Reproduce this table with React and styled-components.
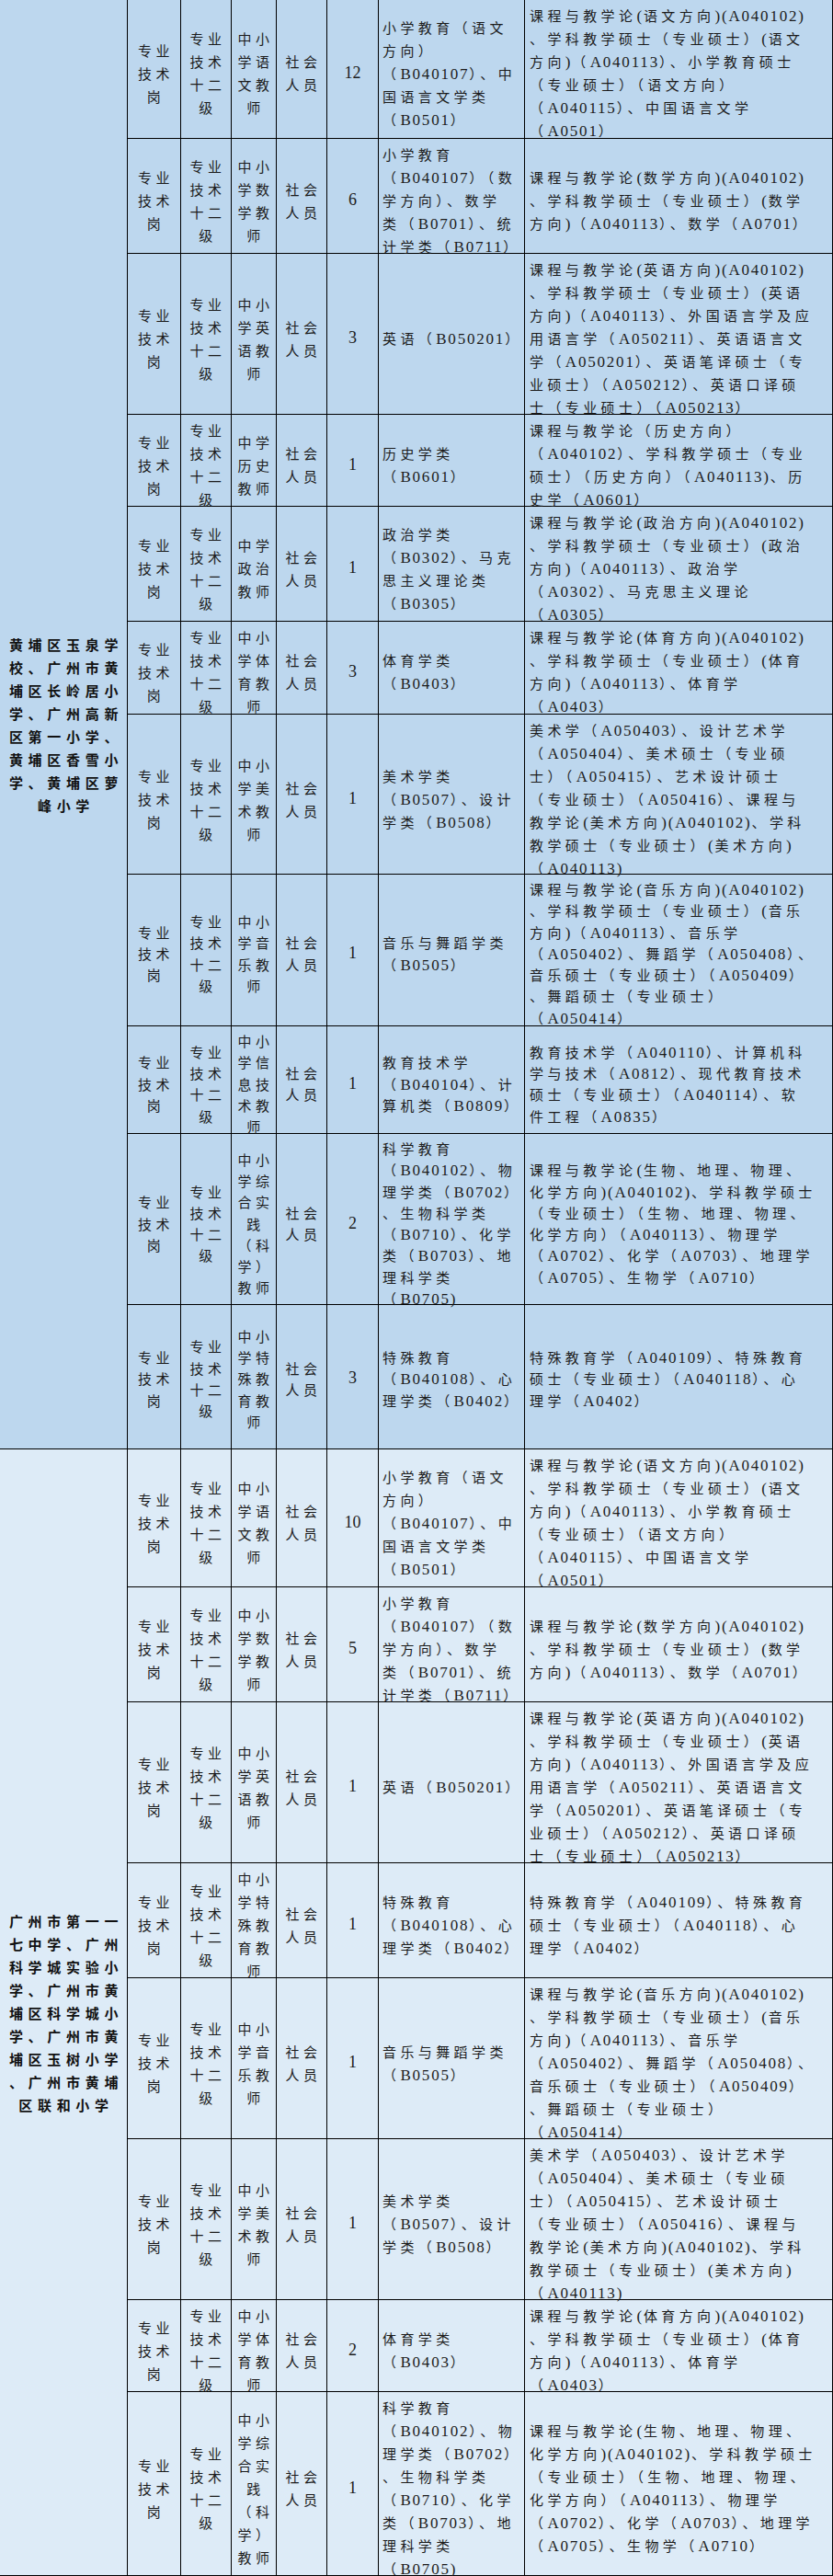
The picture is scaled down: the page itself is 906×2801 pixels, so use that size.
import React from "react";
import styled, { createGlobalStyle } from "styled-components";

const CJK = `"Noto Sans CJK SC", "Noto Sans", sans-serif`;
const LATIN = `"Liberation Serif", "Noto Sans CJK SC", serif`;

const GlobalStyle = createGlobalStyle`
  html, body {
    margin: 0;
    padding: 0;
    background: #ffffff;
  }
`;

const Sheet = styled.div`
  width: 906px;
  font-family: ${CJK};
  font-size: 15px;
  letter-spacing: 4.4px;
  color: #1c1c1c;
`;

const Section = styled.section`
  display: flex;
  background: ${(p) => p.$bg};
`;

const SchoolCell = styled.div`
  flex: 0 0 139px;
  box-sizing: border-box;
  display: flex;
  flex-direction: column;
  justify-content: center;
  padding-left: 6px;
  border-right: 1px solid #000;
  border-bottom: 1px solid #000;
  font-weight: 700;
  letter-spacing: 5.7px;
  line-height: 25px;
  text-align: center;
  color: #111;
`;

const RowList = styled.div`
  flex: 1;
  display: flex;
  flex-direction: column;
`;

const Row = styled.div`
  display: grid;
  grid-template-columns: 58px 55px 49px 55px 56px 159px 335px;
  box-sizing: border-box;
  height: ${(p) => p.$h}px;
  border-bottom: 1px solid #000;
  line-height: ${(p) => p.$lh}px;
`;

const Cell = styled.div`
  box-sizing: border-box;
  display: flex;
  flex-direction: column;
  justify-content: center;
  border-right: 1px solid #000;
  padding-top: 4px;
  min-width: 0;
`;

const CenterCell = styled(Cell)`
  align-items: center;
  text-align: center;
  padding-left: 4px;
`;

const TextCell = styled(Cell)`
  padding-left: ${(p) => p.$pad}px;
`;

const CountCell = styled(Cell)`
  align-items: center;
  font-family: ${LATIN};
  font-size: 18px;
  letter-spacing: 0;
`;

const Line = styled.span`
  display: block;
  white-space: nowrap;
  height: ${(p) => p.$lh}px;
`;

const Latin = styled.span`
  font-family: ${LATIN};
  font-size: 17px;
  letter-spacing: 1.8px;
  line-height: 1;
`;

function Runs({ text }) {
  return text.split(/([\x20-\x7E]+)/).map((part, i) =>
    /^[\x20-\x7E]+$/.test(part) ? <Latin key={i}>{part}</Latin> : part
  );
}

function Lines({ lines, lh }) {
  return lines.map((l, i) => (
    <Line key={i} $lh={lh}>
      <Runs text={l} />
    </Line>
  ));
}

const POSTS = {
  chinese: {
    title: "中小学语文教师",
    bachelor: ["小学教育（语文", "方向）", "（B040107）、中", "国语言文学类", "（B0501）"],
    master: [
      "课程与教学论(语文方向)(A040102)",
      "、学科教学硕士（专业硕士）(语文",
      "方向)（A040113）、小学教育硕士",
      "（专业硕士）（语文方向）",
      "（A040115）、中国语言文学",
      "（A0501）",
    ],
  },
  math: {
    title: "中小学数学教师",
    bachelor: ["小学教育", "（B040107）（数", "学方向）、数学", "类（B0701）、统", "计学类（B0711）"],
    master: [
      "课程与教学论(数学方向)(A040102)",
      "、学科教学硕士（专业硕士）(数学",
      "方向)（A040113）、数学（A0701）",
    ],
  },
  english: {
    title: "中小学英语教师",
    bachelor: ["英语（B050201）"],
    master: [
      "课程与教学论(英语方向)(A040102)",
      "、学科教学硕士（专业硕士）(英语",
      "方向)（A040113）、外国语言学及应",
      "用语言学（A050211）、英语语言文",
      "学（A050201）、英语笔译硕士（专",
      "业硕士）（A050212）、英语口译硕",
      "士（专业硕士）（A050213）",
    ],
  },
  history: {
    title: "中学历史教师",
    bachelor: ["历史学类", "（B0601）"],
    master: [
      "课程与教学论（历史方向）",
      "（A040102）、学科教学硕士（专业",
      "硕士）（历史方向）（A040113)、历",
      "史学（A0601）",
    ],
  },
  politics: {
    title: "中学政治教师",
    bachelor: ["政治学类", "（B0302）、马克", "思主义理论类", "（B0305）"],
    master: [
      "课程与教学论(政治方向)(A040102)",
      "、学科教学硕士（专业硕士）(政治",
      "方向)（A040113）、政治学",
      "（A0302）、马克思主义理论",
      "（A0305）",
    ],
  },
  sports: {
    title: "中小学体育教师",
    bachelor: ["体育学类", "（B0403）"],
    master: [
      "课程与教学论(体育方向)(A040102)",
      "、学科教学硕士（专业硕士）(体育",
      "方向)（A040113）、体育学",
      "（A0403）",
    ],
  },
  art: {
    title: "中小学美术教师",
    bachelor: ["美术学类", "（B0507）、设计", "学类（B0508）"],
    master: [
      "美术学（A050403）、设计艺术学",
      "（A050404）、美术硕士（专业硕",
      "士）（A050415）、艺术设计硕士",
      "（专业硕士）（A050416）、课程与",
      "教学论(美术方向)(A040102)、学科",
      "教学硕士（专业硕士）(美术方向)",
      "（A040113)",
    ],
  },
  music: {
    title: "中小学音乐教师",
    bachelor: ["音乐与舞蹈学类", "（B0505）"],
    master: [
      "课程与教学论(音乐方向)(A040102)",
      "、学科教学硕士（专业硕士）(音乐",
      "方向)（A040113）、音乐学",
      "（A050402）、舞蹈学（A050408）、",
      "音乐硕士（专业硕士）（A050409）",
      "、舞蹈硕士（专业硕士）",
      "（A050414）",
    ],
  },
  it: {
    title: "中小学信息技术教师",
    bachelor: ["教育技术学", "（B040104）、计", "算机类（B0809）"],
    master: [
      "教育技术学（A040110）、计算机科",
      "学与技术（A0812）、现代教育技术",
      "硕士（专业硕士）（A040114）、软",
      "件工程（A0835）",
    ],
  },
  science: {
    title: "中小学综合实践（科学）教师",
    bachelor: [
      "科学教育",
      "（B040102）、物",
      "理学类（B0702）",
      "、生物科学类",
      "（B0710）、化学",
      "类（B0703）、地",
      "理科学类",
      "（B0705)",
    ],
    master: [
      "课程与教学论(生物、地理、物理、",
      "化学方向)(A040102)、学科教学硕士",
      "（专业硕士）（生物、地理、物理、",
      "化学方向）（A040113）、物理学",
      "（A0702）、化学（A0703）、地理学",
      "（A0705）、生物学（A0710）",
    ],
  },
  special: {
    title: "中小学特殊教育教师",
    bachelor: ["特殊教育", "（B040108）、心", "理学类（B0402）"],
    master: [
      "特殊教育学（A040109）、特殊教育",
      "硕士（专业硕士）（A040118）、心",
      "理学（A0402）",
    ],
  },
};

const SECTIONS = [
  {
    bg: "#bdd7ee",
    school: [
      "黄埔区玉泉学",
      "校、广州市黄",
      "埔区长岭居小",
      "学、广州高新",
      "区第一小学、",
      "黄埔区香雪小",
      "学、黄埔区萝",
      "峰小学",
    ],
    rows: [
      { post: "chinese", count: 12, h: 151 },
      { post: "math", count: 6, h: 125 },
      { post: "english", count: 3, h: 175 },
      { post: "history", count: 1, h: 100 },
      { post: "politics", count: 1, h: 125 },
      { post: "sports", count: 3, h: 101 },
      { post: "art", count: 1, h: 174 },
      { post: "music", count: 1, h: 165, tight: true },
      { post: "it", count: 1, h: 117, tight: true },
      { post: "science", count: 2, h: 186, tight: true },
      { post: "special", count: 3, h: 157, tight: true },
    ],
  },
  {
    bg: "#ddebf7",
    school: [
      "广州市第一一",
      "七中学、广州",
      "科学城实验小",
      "学、广州市黄",
      "埔区科学城小",
      "学、广州市黄",
      "埔区玉树小学",
      "、广州市黄埔",
      "区联和小学",
    ],
    rows: [
      { post: "chinese", count: 10, h: 150 },
      { post: "math", count: 5, h: 125 },
      { post: "english", count: 1, h: 175 },
      { post: "special", count: 1, h: 125 },
      { post: "music", count: 1, h: 175 },
      { post: "art", count: 1, h: 175 },
      { post: "sports", count: 2, h: 100 },
      { post: "science", count: 1, h: 200 },
    ],
  },
];

function PostRow({ row }) {
  const post = POSTS[row.post];
  const lh = row.tight ? 23.3 : 25;
  return (
    <Row $h={row.h} $lh={lh}>
      <CenterCell>专业技术岗</CenterCell>
      <CenterCell>专业技术十二级</CenterCell>
      <CenterCell>{post.title}</CenterCell>
      <CenterCell>社会人员</CenterCell>
      <CountCell>{row.count}</CountCell>
      <TextCell $pad={4}>
        <Lines lines={post.bachelor} lh={lh} />
      </TextCell>
      <TextCell $pad={5}>
        <Lines lines={post.master} lh={lh} />
      </TextCell>
    </Row>
  );
}

export default function App() {
  return (
    <>
      <GlobalStyle />
      <Sheet>
        {SECTIONS.map((section, i) => (
          <Section key={i} $bg={section.bg}>
            <SchoolCell>
              {section.school.map((l) => (
                <Line key={l} $lh={25}>
                  {l}
                </Line>
              ))}
            </SchoolCell>
            <RowList>
              {section.rows.map((row, j) => (
                <PostRow key={j} row={row} />
              ))}
            </RowList>
          </Section>
        ))}
      </Sheet>
    </>
  );
}
